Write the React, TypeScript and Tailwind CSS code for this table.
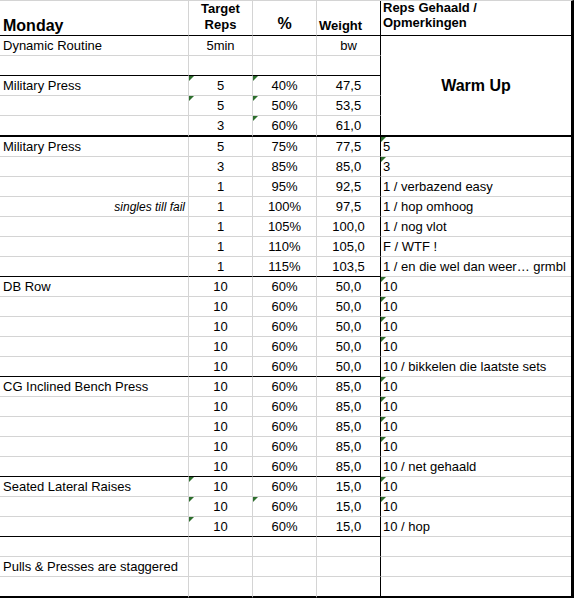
import type { ReactNode } from "react";

type Row = {
  a?: string;
  note?: boolean;
  b?: string;
  c?: string;
  d?: string;
  e?: string;
  tri?: string;
  bottom?: "black" | "thick" | "end";
};

const rows: Row[] = [
  { a: "Dynamic Routine", b: "5min", d: "bw" },
  { bottom: "black" },
  { a: "Military Press", b: "5", c: "40%", d: "47,5", tri: "BC" },
  { b: "5", c: "50%", d: "53,5", tri: "BC" },
  { b: "3", c: "60%", d: "61,0", tri: "C", bottom: "thick" },
  { a: "Military Press", b: "5", c: "75%", d: "77,5", e: "5", tri: "E" },
  { b: "3", c: "85%", d: "85,0", e: "3", tri: "E" },
  { b: "1", c: "95%", d: "92,5", e: "1 / verbazend easy" },
  { a: "singles till fail", note: true, b: "1", c: "100%", d: "97,5", e: "1 / hop omhoog" },
  { b: "1", c: "105%", d: "100,0", e: "1 / nog vlot" },
  { b: "1", c: "110%", d: "105,0", e: "F / WTF !" },
  { b: "1", c: "115%", d: "103,5", e: "1 / en die wel dan weer… grmbl", bottom: "black" },
  { a: "DB Row", b: "10", c: "60%", d: "50,0", e: "10", tri: "E" },
  { b: "10", c: "60%", d: "50,0", e: "10", tri: "E" },
  { b: "10", c: "60%", d: "50,0", e: "10", tri: "E" },
  { b: "10", c: "60%", d: "50,0", e: "10", tri: "E" },
  { b: "10", c: "60%", d: "50,0", e: "10 / bikkelen die laatste sets", bottom: "black" },
  { a: "CG Inclined Bench Press", b: "10", c: "60%", d: "85,0", e: "10", tri: "E" },
  { b: "10", c: "60%", d: "85,0", e: "10", tri: "E" },
  { b: "10", c: "60%", d: "85,0", e: "10", tri: "E" },
  { b: "10", c: "60%", d: "85,0", e: "10", tri: "E" },
  { b: "10", c: "60%", d: "85,0", e: "10 / net gehaald", bottom: "black" },
  { a: "Seated Lateral Raises", b: "10", c: "60%", d: "15,0", e: "10", tri: "BE" },
  { b: "10", c: "60%", d: "15,0", e: "10", tri: "BCE" },
  { b: "10", c: "60%", d: "15,0", e: "10 / hop", tri: "B", bottom: "black" },
  {},
  { a: "Pulls & Presses are staggered" },
  { bottom: "end" },
];

function Cell({ children, className, tri }: { children?: ReactNode; className: string; tri?: boolean }) {
  return (
    <div className={`relative overflow-visible whitespace-nowrap leading-5 ${className}`}>
      {tri && (
        <span className="absolute left-0 top-0 h-0 w-0 border-t-[5px] border-r-[5px] border-t-[#2d6e2d] border-r-transparent" />
      )}
      {children}
    </div>
  );
}

export default function App() {
  return (
    <div className="bg-white w-[574px] h-[598px] text-black text-[13px] font-['Liberation_Sans',Arial,sans-serif]">
      <div className="grid grid-cols-[189px_64px_64px_64px_190px] grid-rows-[35px_repeat(4,20px)_21px_repeat(22,20px)_21px] border-t border-t-[#d4d4d4] border-r-[3px] border-r-black">
        {/* header */}
        <div className="flex items-end border-b border-b-black border-r border-r-[#d4d4d4] pl-[3px] text-[16px] font-bold leading-[18px]">
          Monday
        </div>
        <div className="border-b border-b-black border-r border-r-[#d4d4d4] text-center font-bold leading-4">
          Target
          <br />
          Reps
        </div>
        <div className="flex items-end justify-center border-b border-b-black border-r border-r-[#d4d4d4] pb-[2px] text-[16px] font-bold leading-[18px]">
          %
        </div>
        <div className="flex items-end border-b border-b-black border-r border-r-black pb-px pl-[2px] font-bold leading-4">
          Weight
        </div>
        <div className="border-b border-b-black pl-[2px] font-bold leading-[15px]">
          <div className="-mt-px">
            Reps Gehaald /
            <br />
            Opmerkingen
          </div>
        </div>

        {rows.map((r, i) => {
          const tri = r.tri ?? "";
          const bAD =
            r.bottom === "end" || r.bottom === "thick"
              ? "border-b-2 border-b-black"
              : r.bottom === "black"
                ? "border-b border-b-black"
                : "border-b border-b-[#d4d4d4]";
          const bE = r.bottom === "end" ? "border-b-2 border-b-black" : "border-b border-b-[#d4d4d4]";
          const gray = "border-r border-r-[#d4d4d4]";
          return [
            <Cell
              key={`a${i}`}
              className={`${bAD} ${gray} ${
                r.note ? "pr-[3px] text-right text-[12px] italic" : "pl-[3px]"
              }`}
            >
              {r.a}
            </Cell>,
            <Cell key={`b${i}`} className={`${bAD} ${gray} text-center`} tri={tri.includes("B")}>
              {r.b}
            </Cell>,
            <Cell key={`c${i}`} className={`${bAD} ${gray} text-center`} tri={tri.includes("C")}>
              {r.c}
            </Cell>,
            <Cell key={`d${i}`} className={`${bAD} border-r border-r-black text-center`}>
              {r.d}
            </Cell>,
            i === 0 ? (
              <div
                key="warm"
                className="row-span-5 flex items-center justify-center border-b-2 border-b-black pt-px text-[16px] font-bold"
              >
                Warm Up
              </div>
            ) : i < 5 ? null : (
              <Cell key={`e${i}`} className={`${bE} pl-[2px]`} tri={tri.includes("E")}>
                {r.e}
              </Cell>
            ),
          ];
        })}
      </div>
    </div>
  );
}
